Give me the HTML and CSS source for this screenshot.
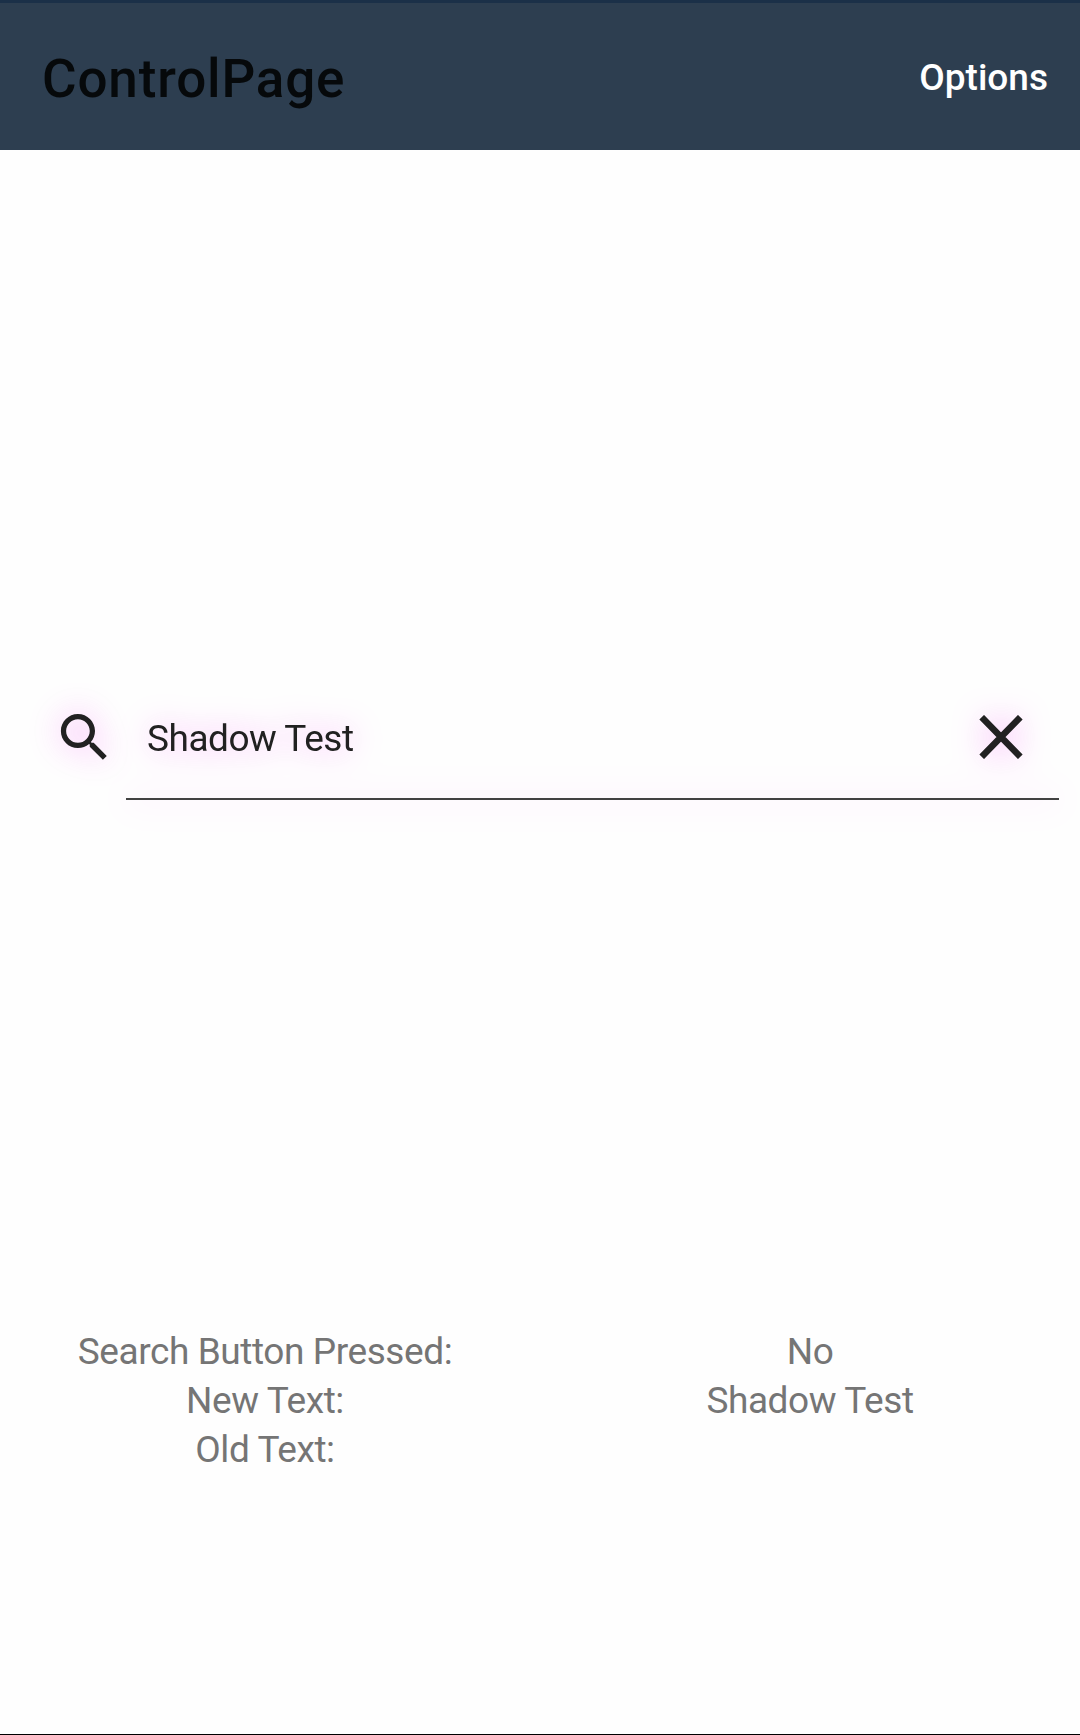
FILE: index.html
```html
<!DOCTYPE html>
<html lang="en">
<head>
<meta charset="utf-8">
<title>ControlPage</title>
<link rel="stylesheet" href="styles.css">
</head>
<body>
<header class="toolbar">
  <h1 class="title">ControlPage</h1>
  <button class="options">Options</button>
</header>
<main class="content">
  <section class="search">
    <svg class="search-icon" viewBox="0 0 24 24"><path d="M15.5 14h-.79l-.28-.27C15.41 12.59 16 11.11 16 9.500 16 5.910 13.090 3 9.500 3S3 5.910 3 9.500 5.910 16 9.500 16c1.610 0 3.090-.59 4.230-1.570l.27.28v.79l5 4.990L20.490 19l-4.990-5zm-6 0C7.010 14 5 11.990 5 9.500S7.010 5 9.500 5 14 7.010 14 9.500 11.990 14 9.500 14z"/></svg>
    <div class="field">
      <span class="query">Shadow Test</span>
      <svg class="clear-icon" viewBox="0 0 44 44"><path d="M2.700 2.200L41.300 41.800M41.300 2.200L2.700 41.800"/></svg>
    </div>
  </section>
  <section class="status">
    <div class="column"><p>Search Button Pressed:</p><p>New Text:</p><p>Old Text:</p></div>
    <div class="column"><p>No</p><p>Shadow Test</p></div>
  </section>
</main>
</body>
</html>
```
FILE: styles.css
```css
* { box-sizing: border-box; }
body { margin: 0; height: 1735px; display: flex; flex-direction: column; background: #fefefe; font-family: Roboto, sans-serif; border-bottom: 1px solid #000; }
.toolbar { height: 150px; flex: none; display: flex; align-items: center; justify-content: space-between; padding: 4px 32px 0 42px; background: #2d3e50; border-top: 3px solid #1b3048; }
.title { margin: 0; font-size: 53px; font-weight: 500; letter-spacing: 0.85px; color: #06090b; }
.options { margin-bottom: 2px; padding: 0; border: 0; background: none; color: #fff; font: 500 37px Roboto, sans-serif; }
.content { flex: 1; display: flex; flex-direction: column; }
.search { display: flex; height: 104px; margin: 546px 21px 0 53px; padding-top: 10px; }
.search-icon { width: 63px; height: 63px; fill: #212121; overflow: visible; filter: drop-shadow(0 0 16px #ee00ee66); }
.field { flex: 1; height: 94px; display: flex; justify-content: space-between; align-items: flex-start; margin-left: 10px; padding: 0 36px 0 21px; border-bottom: 2px solid #424242; filter: drop-shadow(0 0 16px #ee00ee58); }
.query { margin-top: 1px; font-size: 37px; line-height: 64px; letter-spacing: -0.48px; color: #212121; }
.clear-icon { width: 44px; height: 44px; margin-top: 9px; fill: none; stroke: #212121; stroke-width: 6.5; }
.status { display: grid; grid-template-columns: 530px 540px; column-gap: 10px; margin-top: 527px; font-size: 37px; line-height: 49px; letter-spacing: -0.42px; color: #757575; text-align: center; }
.column p { margin: 0; }
```
